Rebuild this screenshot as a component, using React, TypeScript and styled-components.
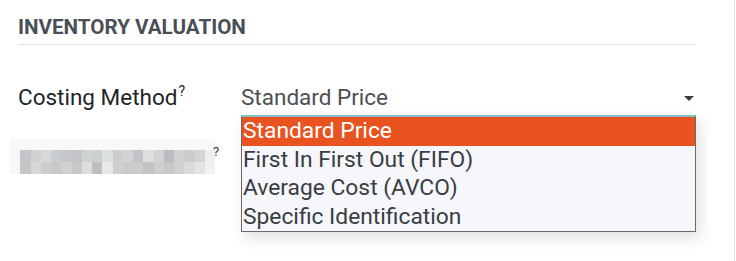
import React from 'react';
import styled, { createGlobalStyle } from 'styled-components';

const GlobalStyle = createGlobalStyle`
  html, body {
    margin: 0;
    padding: 0;
    background: #ffffff;
  }
  body {
    font-family: Roboto, "Liberation Sans", sans-serif;
  }
`;

const Page = styled.div`
  width: 735px;
  height: 261px;
  box-sizing: border-box;
  padding: 0 38px 0 18px;
  border-right: 1px solid #e4e4e4;
  overflow: hidden;
`;

const SectionTitle = styled.h2`
  margin: 0;
  padding: 18px 0 8px;
  font-size: 20.6px;
  font-weight: 700;
  line-height: 18px;
  color: #4a4f57;
  text-transform: uppercase;
  border-bottom: 1px solid #e1e1e1;
`;

const FieldRow = styled.div<{ $top?: number }>`
  display: grid;
  grid-template-columns: 223px 1fr;
  align-items: center;
  margin-top: ${p => p.$top ?? 0}px;
`;

const Label = styled.label`
  font-size: 22.5px;
  color: #212529;
  line-height: 28px;
  white-space: nowrap;
`;

const Help = styled.sup`
  font-size: 14px;
  color: #212529;
  margin-left: 1px;
  vertical-align: 9px;
  line-height: 0;
`;

const SelectWrap = styled.div`
  position: relative;
`;

const SelectBox = styled.div`
  display: flex;
  align-items: center;
  justify-content: space-between;
  height: 30px;
  font-size: 22.5px;
  color: #4c4f54;
  padding-right: 2px;
`;

const Caret = styled.span`
  width: 0;
  height: 0;
  border-left: 5px solid transparent;
  border-right: 5px solid transparent;
  border-top: 5px solid #3c3c3c;
  margin-top: 2px;
`;

const Menu = styled.ul`
  position: absolute;
  top: 33px;
  left: 0;
  right: 0;
  margin: 0;
  padding: 0;
  list-style: none;
  background: #f5f7fb;
  border: 1px solid #6b6b6b;
  border-top: 2px solid #7fbfbf;
  box-shadow: 4px 6px 14px rgba(0, 0, 0, 0.12);
  z-index: 2;
`;

const Option = styled.li<{ $active?: boolean }>`
  height: 28.5px;
  line-height: 28.5px;
  padding-left: 1px;
  font-size: 22.8px;
  color: ${p => (p.$active ? '#ffffff' : '#3a3d42')};
  background: ${p => (p.$active ? '#e8531f' : 'transparent')};
`;

const Blurred = styled.div`
  display: flex;
  align-items: flex-start;
  margin-left: -8px;
`;

const PixelGrid = styled.div`
  display: grid;
  grid-template-columns: repeat(20, 10.25px);
  grid-auto-rows: 12px;
  padding: 11px 0 0 0;
  background: #f8f8f8;
`;

const Pixel = styled.span<{ $c: string }>`
  background: ${p => p.$c};
`;

const BlurHelp = styled.span`
  font-size: 13px;
  line-height: 13px;
  color: #3a3a3a;
  margin: 6px 0 0 -2px;
`;

const topRow = [
  '#f7f7f7', '#c3c5c8', '#cfd0d2', '#d7d8da', '#cacdd0', '#c5c7ca', '#c3c5c7', '#cfd2d4',
  '#cdcece', '#dcdfe1', '#cbcdcf', '#d2d3d4', '#c1c3c6', '#dddfe0', '#d2d3d4', '#babcbf',
  '#d0d1d2', '#cbcccd', '#d3d4d5', '#eeeeee',
];
const bottomRow = [
  '#f7f7f7', '#c5c6c8', '#d7d7d6', '#cbcccd', '#c7c9cb', '#d0d1d2', '#c8c9ca', '#dedeDb',
  '#bdbec0', '#e8e8e6', '#cecfd0', '#c9cacb', '#cbcccd', '#c3c4c6', '#cecfd0', '#c7c8c9',
  '#cfd0d1', '#d9dada', '#e2e3e3', '#f1f1f1',
];

const options = [
  'Standard Price',
  'First In First Out (FIFO)',
  'Average Cost (AVCO)',
  'Specific Identification',
];

const App: React.FC = () => {
  return (
    <>
      <GlobalStyle />
      <Page>
        <SectionTitle>Inventory Valuation</SectionTitle>
        <FieldRow $top={37}>
          <Label>
            Costing Method<Help>?</Help>
          </Label>
          <SelectWrap>
            <SelectBox>
              Standard Price
              <Caret />
            </SelectBox>
            <Menu>
              {options.map((o, i) => (
                <Option key={o} $active={i === 0}>
                  {o}
                </Option>
              ))}
            </Menu>
          </SelectWrap>
        </FieldRow>
        <FieldRow $top={27}>
          <Blurred>
            <PixelGrid>
              {topRow.concat(bottomRow).map((c, i) => (
                <Pixel key={i} $c={c} />
              ))}
            </PixelGrid>
            <BlurHelp>?</BlurHelp>
          </Blurred>
          <div />
        </FieldRow>
      </Page>
    </>
  );
};

export default App;
